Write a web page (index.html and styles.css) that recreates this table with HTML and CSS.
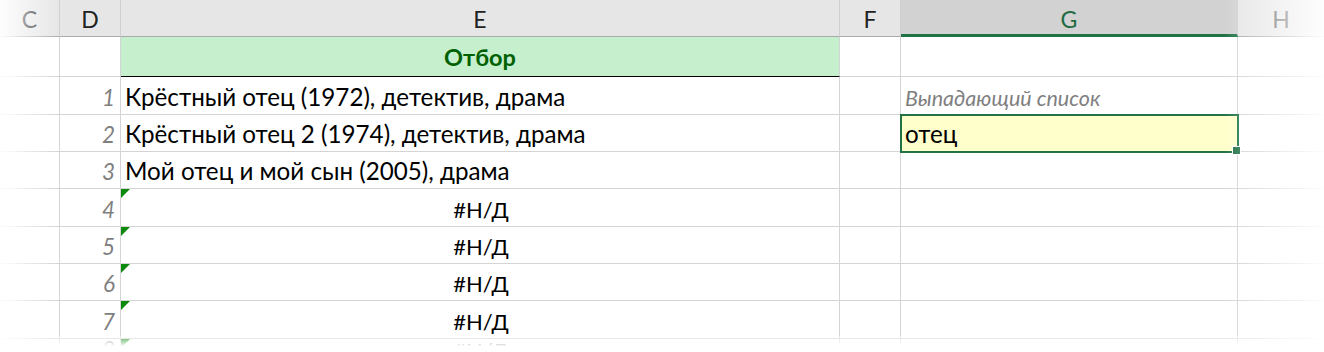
FILE: index.html
```html
<!DOCTYPE html>
<html lang="ru">
<head>
<meta charset="utf-8">
<link rel="stylesheet" href="styles.css">
</head>
<body>
<div class="sheet">
  <div class="grid">
    <div class="hd">C</div>
    <div class="hd">D</div>
    <div class="hd">E</div>
    <div class="hd">F</div>
    <div class="hd hd-sel">G</div>
    <div class="hd hd-last">H</div>

    <div class="c"></div><div class="c"></div><div class="c title">Отбор</div><div class="c"></div><div class="c"></div><div class="c last"></div>

    <div class="c"></div><div class="c num">1</div><div class="c txt">Крёстный отец (1972), детектив, драма</div><div class="c"></div><div class="c note">Выпадающий список</div><div class="c last"></div>

    <div class="c"></div><div class="c num">2</div><div class="c txt">Крёстный отец 2 (1974), детектив, драма</div><div class="c"></div><div class="c sel"><span>отец</span><i class="handle"></i></div><div class="c last"></div>

    <div class="c"></div><div class="c num">3</div><div class="c txt">Мой отец и мой сын (2005), драма</div><div class="c"></div><div class="c"></div><div class="c last"></div>

    <div class="c"></div><div class="c num">4</div><div class="c na">#Н/Д</div><div class="c"></div><div class="c"></div><div class="c last"></div>

    <div class="c"></div><div class="c num">5</div><div class="c na">#Н/Д</div><div class="c"></div><div class="c"></div><div class="c last"></div>

    <div class="c"></div><div class="c num">6</div><div class="c na">#Н/Д</div><div class="c"></div><div class="c"></div><div class="c last"></div>

    <div class="c"></div><div class="c num">7</div><div class="c na">#Н/Д</div><div class="c"></div><div class="c"></div><div class="c last"></div>

    <div class="c"></div><div class="c num">8</div><div class="c na">#Н/Д</div><div class="c"></div><div class="c"></div><div class="c last"></div>
  </div>
  <div class="fade fade-left"></div>
  <div class="fade fade-right"></div>
  <div class="fade fade-bottom"></div>
</div>
</body>
</html>
```
FILE: styles.css
```css
* { box-sizing: border-box; }
html, body { margin: 0; padding: 0; background: #fff; }
body { width: 1324px; height: 352px; overflow: hidden; font-family: "Lato", "Open Sans", sans-serif; }

.sheet { position: relative; width: 1324px; height: 352px; overflow: hidden; }

.grid {
  display: grid;
  grid-template-columns: 60px 61px 719px 61px 337px 1fr;
  grid-template-rows: 37px 40px 38px 37px 37px 38px 37px 37px 38px;
}

.hd {
  background: #e6e6e6;
  border-right: 1px solid #d0d0d0;
  border-bottom: 1px solid #ababab;
  display: flex;
  align-items: center;
  justify-content: center;
  font-size: 23px;
  color: #222;
  padding-top: 2px;
}
.hd-sel { background: #d2d2d2; color: #1e6b41; border-bottom: 3px solid #217346; padding-top: 4px; }
.hd-last { border-right: none; color: #555; }

.c {
  position: relative;
  border-right: 1px solid #d4d4d4;
  border-bottom: 1px solid #d4d4d4;
  display: flex;
  align-items: flex-end;
  font-size: 24.2px;
  line-height: 1;
  padding: 0 4px 5px;
  color: #000;
  white-space: nowrap;
}
.c.last { border-right: none; }

.title {
  background: #c6efce;
  color: #006100;
  font-weight: bold;
  justify-content: center;
  border-bottom: 1px solid #000;
  padding-bottom: 7px;
  font-size: 23.5px;
}
.num { justify-content: flex-end; font-style: italic; color: #7f7f7f; padding-right: 5px; font-size: 22.5px; }
.txt { justify-content: flex-start; }
.na { justify-content: center; font-size: 22px; padding-left: 6px; }
.na::before {
  content: "";
  position: absolute;
  left: 0;
  top: 0;
  border-top: 9px solid #0d8a0d;
  border-right: 9px solid transparent;
}
.note { font-style: italic; color: #7f7f7f; font-size: 21.5px; }
.sel {
  background: #ffffcc;
  outline: 2px solid #217346;
  outline-offset: -1px;
  z-index: 2;
}
.handle {
  position: absolute;
  right: -4px;
  bottom: -4px;
  width: 7px;
  height: 7px;
  background: #217346;
  border: 1px solid #fff;
  box-sizing: content-box;
}

.fade { position: absolute; pointer-events: none; z-index: 5; }
.fade-left { left: 0; top: 0; bottom: 0; width: 60px; background: linear-gradient(to right, rgba(255,255,255,0.95), rgba(255,255,255,0)); }
.fade-right { right: 0; top: 0; bottom: 0; width: 100px; background: linear-gradient(to left, rgba(255,255,255,0.95), rgba(255,255,255,0)); }
.fade-bottom { left: 0; right: 0; bottom: 0; height: 16px; background: linear-gradient(to top, #fff 35%, rgba(255,255,255,0.3)); }
```
